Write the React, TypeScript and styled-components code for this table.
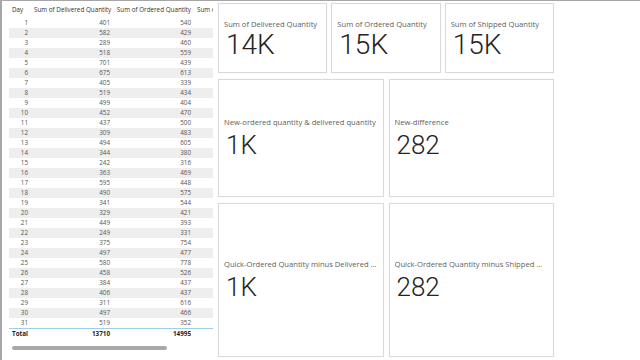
import styled, { createGlobalStyle } from "styled-components";

const GlobalStyle = createGlobalStyle`
  html, body {
    margin: 0;
    padding: 0;
    background: #ffffff;
  }
  body {
    font-family: "Open Sans", "Liberation Sans", sans-serif;
  }
`

const StyledPage = styled.div`
  width: 640px;
  height: 360px;
  box-sizing: border-box;
  border-top: 1px solid #a6a6a6;
  border-left: 2px solid #a6a6a6;
  display: flex;
  overflow: hidden;
`
const StyledTablePanel = styled.div`
  width: 211px;
  flex-shrink: 0;
  padding-left: 7px;
  box-sizing: border-box;
  display: flex;
  flex-direction: column;
`
const StyledTableClip = styled.div`
  width: 204px;
  overflow: hidden;
`
const StyledTable = styled.table`
  border-collapse: collapse;
  width: 260px;
  table-layout: fixed;
  font-size: 6.3px;
  color: #555555;
`
const StyledTh = styled.th<{ $width: number; $align?: string }>`
  width: ${p => p.$width}px;
  height: 17px;
  padding: 0 3px;
  font-weight: 400;
  color: #333333;
  text-align: ${p => p.$align || "right"};
  white-space: nowrap;
  overflow: hidden;
  box-sizing: border-box;
`
const StyledTr = styled.tr<{ $striped: boolean }>`
  height: 10px;
  background: ${p => (p.$striped ? "#eeeeee" : "#ffffff")};
`
const StyledTd = styled.td`
  padding: 0 3px;
  text-align: right;
  white-space: nowrap;
  line-height: 10px;
`
const StyledTotalRow = styled.tr`
  height: 10px;
  border-top: 1px solid #9fcdea;
  font-weight: 700;
  color: #252423;
`
const StyledTotalLabel = styled.td`
  padding: 0 3px;
  text-align: left;
  line-height: 10px;
`
const StyledScrollbar = styled.div`
  margin-top: 7px;
  margin-left: 3px;
  width: 155px;
  height: 4px;
  border-radius: 2px;
  background: #a8a8a8;
`
const StyledCards = styled.div`
  flex: 1;
  padding: 2px 0 0 5px;
  display: flex;
  flex-direction: column;
  gap: 6px;
`
const StyledCardRow = styled.div<{ $cols: number; $height: number }>`
  width: 336px;
  height: ${p => p.$height}px;
  display: grid;
  grid-template-columns: repeat(${p => p.$cols}, 1fr);
  gap: ${p => (p.$cols === 3 ? 4 : 5)}px;
`
const StyledCard = styled.div`
  border: 1px solid #d9d9d9;
  box-shadow: 0 0 1px rgba(0, 0, 0, 0.08);
  background: #ffffff;
  display: flex;
  flex-direction: column;
  justify-content: center;
  padding: 2px 5px 0 5px;
  min-width: 0;
`
const StyledCardTitle = styled.div`
  font-size: 7.6px;
  color: #605e5c;
  white-space: nowrap;
  overflow: hidden;
  text-overflow: ellipsis;
  line-height: 11px;
`
const StyledCardValue = styled.div<{ $size: number; $lead: number }>`
  font-family: "Roboto", "Liberation Sans", sans-serif;
  font-weight: 300;
  font-size: ${p => p.$size}px;
  line-height: ${p => p.$size + p.$lead}px;
  color: #252423;
  padding-left: 2px;
`

const rows: [number, number, number][] = [
  [1, 401, 540], [2, 582, 429], [3, 289, 460], [4, 518, 559], [5, 701, 439],
  [6, 675, 613], [7, 405, 339], [8, 519, 434], [9, 499, 404], [10, 452, 470],
  [11, 437, 500], [12, 309, 483], [13, 494, 605], [14, 344, 380], [15, 242, 316],
  [16, 363, 469], [17, 595, 448], [18, 490, 575], [19, 341, 544], [20, 329, 421],
  [21, 449, 393], [22, 249, 331], [23, 375, 754], [24, 497, 477], [25, 580, 778],
  [26, 458, 526], [27, 384, 437], [28, 406, 437], [29, 311, 616], [30, 497, 466],
  [31, 519, 352],
]

const Card = ({title, value, size, lead}: { title: string; value: string; size: number; lead: number }) => (
  <StyledCard>
    <StyledCardTitle>{title}</StyledCardTitle>
    <StyledCardValue $size={size} $lead={lead}>{value}</StyledCardValue>
  </StyledCard>
)

export default function App() {
  return (
    <>
      <GlobalStyle/>
      <StyledPage>
        <StyledTablePanel>
          <StyledTableClip>
            <StyledTable>
              <thead>
              <tr>
                <StyledTh $width={22} $align="left">Day</StyledTh>
                <StyledTh $width={82}>Sum of Delivered Quantity</StyledTh>
                <StyledTh $width={81}>Sum of Ordered Quantity</StyledTh>
                <StyledTh $width={75} $align="left">Sum of Shipped Quantity</StyledTh>
              </tr>
              </thead>
              <tbody>
              {rows.map(([day, delivered, ordered]) => (
                <StyledTr key={day} $striped={day % 2 === 0}>
                  <StyledTd>{day}</StyledTd>
                  <StyledTd>{delivered}</StyledTd>
                  <StyledTd>{ordered}</StyledTd>
                  <StyledTd/>
                </StyledTr>
              ))}
              <StyledTotalRow>
                <StyledTotalLabel>Total</StyledTotalLabel>
                <StyledTd>13710</StyledTd>
                <StyledTd>14995</StyledTd>
                <StyledTd/>
              </StyledTotalRow>
              </tbody>
            </StyledTable>
          </StyledTableClip>
          <StyledScrollbar/>
        </StyledTablePanel>
        <StyledCards>
          <StyledCardRow $cols={3} $height={70}>
            <Card title="Sum of Delivered Quantity" value="14K" size={28} lead={2}/>
            <Card title="Sum of Ordered Quantity" value="15K" size={28} lead={2}/>
            <Card title="Sum of Shipped Quantity" value="15K" size={28} lead={2}/>
          </StyledCardRow>
          <StyledCardRow $cols={2} $height={118}>
            <Card title="New-ordered quantity & delivered quantity" value="1K" size={26} lead={8}/>
            <Card title="New-difference" value="282" size={26} lead={8}/>
          </StyledCardRow>
          <StyledCardRow $cols={2} $height={154}>
            <Card title="Quick-Ordered Quantity minus Delivered Quantity" value="1K" size={26} lead={8}/>
            <Card title="Quick-Ordered Quantity minus Shipped Quantity" value="282" size={26} lead={8}/>
          </StyledCardRow>
        </StyledCards>
      </StyledPage>
    </>
  )
}
